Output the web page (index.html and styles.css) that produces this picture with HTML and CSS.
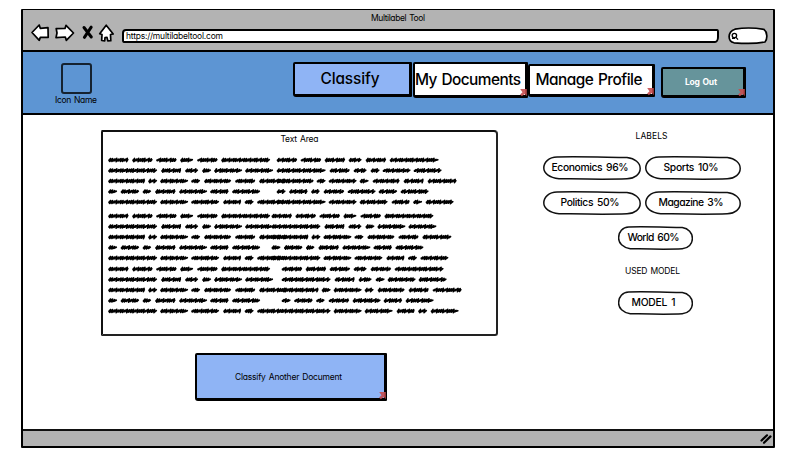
FILE: index.html
```html
<!DOCTYPE html>
<html lang="en">
<head>
<meta charset="utf-8">
<title>Multilabel Tool</title>
<link rel="stylesheet" href="styles.css">
</head>
<body>
<svg width="0" height="0" class="defs">
  <symbol id="mark" viewBox="0 0 9 9"><path d="M1.2 1 7.8 1 7.8 8 5.8 6.1 2.8 8.2 1.1 6.4 3.5 4.2Z"/></symbol>
  <symbol id="pill" viewBox="0 0 98 24" preserveAspectRatio="none"><path vector-effect="non-scaling-stroke" d="M14 1C38 .4 66 1.4 84 1.5 92 2.3 97.2 7 97.2 12.5 97.2 18 92 22.4 84 22.8 62 23.6 38 23 16 22.7 6 21.6 .8 17 .8 12 .8 6 6 1.2 14 1Z"/></symbol>
</svg>
<div class="window">
  <header class="chrome">
    <div class="title"><span data-w="54">Multilabel Tool</span></div>
    <div class="toolbar">
      <svg class="nav-icons" width="90" height="24" viewBox="28 21 90 24">
        <path class="outline" d="M32 32.5 39.2 25 40.3 28.3 48 27.7 48.2 37.3 40.3 37.4 39.3 40.3Z"/>
        <path class="outline" d="M56.2 28.7 65 28.4 66 25.3 73.5 33 66.3 40.3 65.3 37 56 37.6 57 33Z"/>
        <path class="cross" d="M84 27.5 91.3 37M91.2 27.2 84.4 37.3"/>
        <path class="outline" d="M106.2 25.2 113.2 34 110.5 34.5 110.8 40.7 107.8 40.8 107 37.4 105 37.5 104.7 40.8 101.7 40.5 102 34.5 99.7 33.7Z"/>
      </svg>
      <div class="url"><span data-w="97">https://multilabeltool.com</span></div>
      <svg class="search" width="41" height="18" viewBox="727 27 41 18">
        <path class="outline" d="M735 29.2C745 27.4 756 28 764 29.4 767.4 32 767.7 39 765 42 755 44 742 43.4 734 42.8 727.5 41 727.2 32 735 29.2Z"/>
        <circle class="lens" cx="734.4" cy="35.5" r="2.2"/><path class="lens" d="M736 37.4 738 39.6M732 38.4H735"/>
      </svg>
    </div>
  </header>
  <nav class="banner">
    <div class="brand"><div class="brand-box"></div><span data-w="42">Icon Name</span></div>
    <a class="tab classify"><span data-w="59">Classify</span></a>
    <a class="tab docs"><span data-w="106">My Documents</span><svg class="mark"><use href="#mark"/></svg></a>
    <a class="tab profile"><span data-w="107">Manage Profile</span><svg class="mark"><use href="#mark"/></svg></a>
    <a class="tab logout"><span data-w="32">Log Out</span><svg class="mark"><use href="#mark"/></svg></a>
  </nav>
  <main>
    <section class="document">
      <div class="paper">
        <div class="caption"><span data-w="38">Text Area</span></div>
        <svg id="scribble" width="392" height="180" viewBox="102 150 392 180"></svg>
      </div>
      <a class="tab another"><span data-w="107">Classify Another Document</span><svg class="mark"><use href="#mark"/></svg></a>
    </section>
    <aside>
      <div class="heading labels"><span data-w="32">LABELS</span></div>
      <div class="row">
        <div class="pill a"><svg><use href="#pill"/></svg><span data-w="77">Economics 96%</span></div>
        <div class="pill b"><svg><use href="#pill"/></svg><span data-w="55">Sports 10%</span></div>
      </div>
      <div class="row">
        <div class="pill a"><svg><use href="#pill"/></svg><span data-w="59">Politics 50%</span></div>
        <div class="pill b"><svg><use href="#pill"/></svg><span data-w="65">Magazine 3%</span></div>
      </div>
      <div class="pill c"><svg><use href="#pill"/></svg><span data-w="52">World 60%</span></div>
      <div class="heading used"><span data-w="55">USED MODEL</span></div>
      <div class="pill c"><svg><use href="#pill"/></svg><span data-w="44">MODEL 1</span></div>
    </aside>
  </main>
  <footer><svg width="12" height="10" viewBox="0 0 12 10"><path d="M1.5 6.5 7 1.3M4 8.8 10.5 2.4"/></svg></footer>
</div>
<script src="main.js"></script>
</body>
</html>
```
FILE: styles.css
```css
* { box-sizing: border-box; }
body {
  margin: 0; width: 795px; height: 460px; overflow: hidden; background: #fff; color: #000;
  font-family: Inter, "Liberation Sans", sans-serif; font-feature-settings: "cv11";
  font-size: 8.5px; line-height: 12px; word-spacing: 1px; padding: 9px 0 0 21px;
}
span { white-space: nowrap; display: block; position: relative; }
.defs { position: absolute; }
.window { width: 754px; height: 439px; border: 2px solid #000; border-top-width: 1px; border-radius: 1px; display: flex; flex-direction: column; }
.chrome { height: 40px; background: #b3b3b3; }
.title { height: 13px; padding-top: 2px; display: flex; justify-content: center; }
.toolbar { display: flex; align-items: flex-start; padding-left: 5px; }
.nav-icons { margin-top: -2px; flex: none; }
.outline { fill: #fff; stroke: #000; stroke-width: 1.7; stroke-linejoin: round; }
.cross { fill: none; stroke: #000; stroke-width: 3; stroke-linecap: round; }
.url { width: 597px; height: 14px; margin: 6px 0 0 4px; border: 2px solid #000; border-radius: 4px 2px 4px 2px / 4px 3px 6px 3px; background: #fff; padding: 0 0 0 2px; display: flex; line-height: 11px; }
.search { margin: 4px 0 0 8px; flex: none; }
.lens { fill: none; stroke: #000; stroke-width: 1.3; }
.banner { height: 65px; background: #5d95d3; border-top: 2px solid #000; border-bottom: 2px solid #000; display: flex; align-items: flex-start; }
.brand { width: 60px; margin: 11px 0 0 23px; display: flex; flex-direction: column; align-items: center; }
.brand-box { width: 31px; height: 31px; border: 2px solid #152230; border-radius: 3px; }
.tab { position: relative; display: flex; align-items: center; justify-content: center; border: 2px solid #000; border-right-width: 3px; border-bottom-width: 3px; border-radius: 2px 1px 1px 3px; background: #fff; font-size: 15.4px; font-weight: 500; line-height: 20px; flex: none; }
.classify { width: 119px; height: 35px; margin: 10px 0 0 187px; background: #8fb4f5; }
.classify span { left: -2px; }
.docs { width: 115px; height: 36px; margin: 10px 0 0 1px; }
.docs span { left: -2px; }
.profile { width: 127px; height: 33px; margin: 12px 0 0 0; }
.profile span { left: -2px; }
.logout { width: 85px; height: 31px; margin: 15px 0 0 6px; background: #66949b; color: #fff; font-size: 8.5px; font-weight: 700; }
.logout span { left: -2px; }
.mark { position: absolute; right: -3px; bottom: -2px; width: 9px; height: 9px; fill: #c64e51; opacity: .9; }
main { flex: 1; display: flex; min-height: 0; }
.document { width: 476px; padding: 15px 0 0 77px; }
.paper { width: 397px; height: 206px; border: 2px solid #222; border-left-color: #111; border-top-color: #111; border-radius: 2px 4px 3px 1px; margin-left: 1px; }
.caption { height: 18px; padding-top: 1px; display: flex; justify-content: center; }
#scribble { display: block; margin-left: -2px; }
#scribble path { fill: none; stroke: #000; stroke-width: 1.6; stroke-linejoin: round; stroke-linecap: round; }
.another { width: 192px; height: 48px; margin: 17px 0 0 95px; background: #8fb4f5; font-size: 8.5px; font-weight: 400; }
.another span { left: -2px; }
aside { margin-left: 44px; width: 200px; display: flex; flex-direction: column; align-items: flex-start; }
.heading { display: flex; justify-content: center; height: 12px; }
.labels { width: 65px; margin: 15px 0 14px 76px; }
.used { width: 75px; margin: 15px 0 14px 72px; }
.row { display: flex; gap: 4px; margin-bottom: 11px; }
.pill { position: relative; height: 24px; display: flex; justify-content: center; align-items: center; font-size: 10.3px; font-weight: 500; word-spacing: 1.5px; }
.pill svg { position: absolute; inset: 0; width: 100%; height: 100%; fill: #fff; stroke: #111; stroke-width: 1.5; }
.pill span { left: -2px; top: -1px; }
.a { width: 98px; }
.b { width: 96px; }
.c { width: 75px; margin-left: 75px; }
footer { height: 17px; background: #b3b3b3; border-top: 2px solid #111; display: flex; justify-content: flex-end; align-items: center; padding-right: 1px; }
footer svg { fill: none; stroke: #000; stroke-width: 2.2; stroke-linecap: round; }
```
FILE: main.js
```js
// Spread each caption to its drawn width.
document.querySelectorAll('[data-w]').forEach(function (el) {
  var n = el.textContent.length;
  var extra = (Number(el.dataset.w) - el.getBoundingClientRect().width) / (n - 1);
  el.style.letterSpacing = extra + 'px';
  el.style.marginRight = -extra + 'px';
});

// Placeholder copy: each pair is the start and end of one scribbled word.
var lines = [
  [109,129.5,133,153.5,157,177.5,181,194,198,218.5,222,271],
  [109,158,162,182,186,199,203,212,215,243,246,274],
  [109,146,149,158,161,189,192,201,205,232,236,256,260,289],
  [109,118,121.5,140,143.5,152,156,176.5,180,208,211,229.5,233,261],
  [109,158,161,189,192,220,224,242,245.5,254.5,258,286]
];
var blocks = [[160, 168.5], [216, 163.3], [269, 173.5]];
var svg = document.getElementById('scribble');
var d = '';
function word(a, b, y) {
  var x = a + 1, i = 0;
  d += 'M' + x + ' ' + (y + 0.6);
  while (x < b - 2) {
    var amp = 0.6 + 1.1 * Math.abs(Math.sin(i * 1.9 + a));
    d += 'L' + (x + 1.5).toFixed(1) + ' ' + (y - amp).toFixed(1) + 'L' + (x + 0.8).toFixed(1) + ' ' + (y + amp).toFixed(1);
    x += 2.1;
    i++;
  }
  d += 'L' + (b - 0.7) + ' ' + (y - 0.3);
  d += 'M' + (a + 1) + ' ' + y + 'H' + (b - 1);
}
blocks.forEach(function (block) {
  lines.forEach(function (line, row) {
    for (var i = 0; i < line.length; i += 2) {
      word(line[i], line[i + 1], block[0] + row * 10.5);
      word(line[i] + block[1], line[i + 1] + block[1], block[0] + row * 10.5);
    }
  });
});
var path = document.createElementNS('http://www.w3.org/2000/svg', 'path');
path.setAttribute('d', d);
svg.appendChild(path);
```
